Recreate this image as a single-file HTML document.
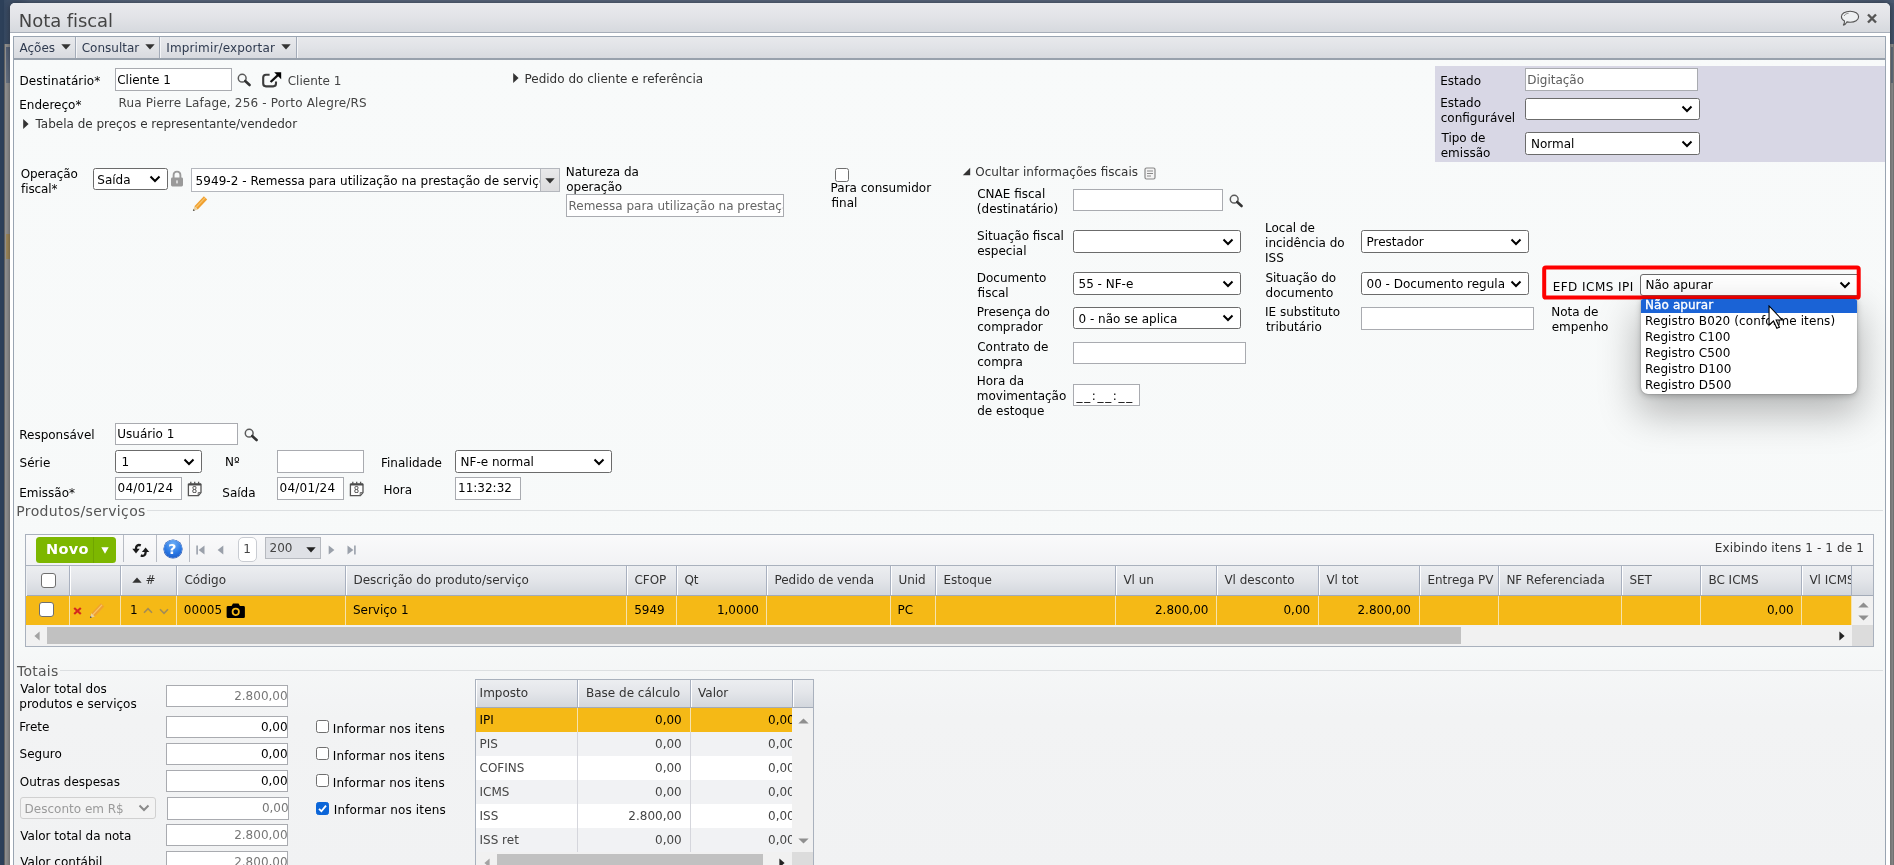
<!DOCTYPE html>
<html lang="pt-BR"><head><meta charset="utf-8"><title>Nota fiscal</title>
<style>
html,body{margin:0;padding:0}
body{width:1894px;height:865px;overflow:hidden;position:relative;background:#8f8f8f;font-family:'DejaVu Sans','Liberation Sans',sans-serif;font-size:12px;line-height:14px;color:#000}
.a{position:absolute}
.t{position:absolute;white-space:nowrap;font-size:12px;line-height:14px}
.i{position:absolute;box-sizing:border-box;border:1px solid #a9abb0;background:#fff;overflow:hidden}
.s{position:absolute;box-sizing:border-box;border:1px solid #6b6b6b;border-radius:2.5px;background:#fff;overflow:hidden}
.cb{position:absolute;box-sizing:border-box;width:13px;height:13px;border:1px solid #6f6f6f;border-radius:2.5px;background:#fff}
.hc{position:absolute;top:0;height:29px;box-sizing:border-box;border-left:1px solid #fff;border-right:1px solid #a8b0bf}
.hc .t{top:10px;color:#333}
.dc{position:absolute;top:0;height:29px;box-sizing:border-box;border-right:1px solid #e3e3e3}
.dc .t{top:10.6px}
.tr{position:absolute;left:0;width:316px;height:24px}
.tr .t{top:5px;color:#444}
.sep{position:absolute;top:37px;width:1px;height:21px;background:#a3abb8;box-shadow:1px 0 0 #f4f5f7}
</style></head><body><div id="root" style="position:absolute;left:0;top:0;width:1894px;height:865px;overflow:hidden;will-change:transform">

<div class="a" style="left:0;top:0;width:1894px;height:865px;background:#949494"></div>
<div class="a" style="left:0;top:0;width:1894px;height:44px;background:linear-gradient(to right,#30435b 0,#3c4d66 8px,#4a5a72 14px,#4a5a72 1884px,#45556d 1894px)"></div>
<div class="a" style="left:0;top:0;width:1894px;height:3px;background:linear-gradient(to right,#34465e 0,#506078 30px,#5c6a80 160px,#5c6a80 1800px,#4a5a72 1894px)"></div>
<div class="a" style="left:0;top:0;width:4px;height:865px;background:#2d4059"></div>
<div class="a" style="left:4px;top:44px;width:1px;height:821px;background:#626262"></div>
<div class="a" style="left:6px;top:47px;width:4px;height:36px;background:linear-gradient(#56637a,#6c7889)"></div>
<div class="a" style="left:6px;top:234px;width:4px;height:25px;background:#a38c5e"></div>
<div class="a" style="left:1891px;top:47px;width:2px;height:36px;background:#66717f"></div>
<div class="a" style="left:1893px;top:44px;width:1px;height:821px;background:#7a7a7a"></div>
<div class="a" style="left:10px;top:3px;width:1880px;height:870px;background:#fff;border-radius:5px 5px 0 0;box-shadow:0 0 6px rgba(0,0,0,.5)"></div>
<div class="a" style="left:10px;top:3px;width:1880px;height:29px;border-radius:5px 5px 0 0;background:linear-gradient(#e9eaed,#e3e4e8 45%,#d6d9de);border-bottom:1px solid #a7aeb9"></div>
<div class="t " style="left:18.84px;top:10px;font-size:18px;line-height:21px;color:#444;letter-spacing:-0.07px">Nota fiscal</div>
<svg class="a" style="left:1840px;top:9.5px" width="20" height="17" viewBox="0 0 20 17"><path d="M10.2 1.2 C15 1.2 18.6 3.6 18.6 6.8 C18.6 10 15 12.3 10.2 12.3 C9 12.3 7.9 12.2 6.9 11.9 C6 13.6 4.6 14.8 3.2 15.3 C4.2 14.2 4.6 12.6 4.5 11 C2.6 10 1.4 8.5 1.4 6.8 C1.4 3.6 5.2 1.2 10.2 1.2 Z" fill="#eef0f2" stroke="#555" stroke-width="1.1"/><path d="M4.2 6 C4.6 4.4 6.6 3.4 8.6 3.3" fill="none" stroke="#777" stroke-width="0.8"/></svg>
<svg class="a" style="left:1866px;top:13px" width="12" height="11" viewBox="0 0 12 11"><path d="M2 1.5 L10 9.5 M10 1.5 L2 9.5" stroke="#555" stroke-width="2.4"/></svg>
<div class="a" style="left:13px;top:36px;width:1873px;height:840px;box-sizing:border-box;border:1px solid #9aa5b2;background:linear-gradient(#f8fafa 0,#f7f9f9 600px,#f2f3f4 680px,#f1f2f3 100%)"></div>
<div class="a" style="left:14px;top:37px;width:1871px;height:21px;background:linear-gradient(#e8e9ec,#e1e3e7 50%,#d8dadf);border-bottom:2px solid #98a1ac"></div>
<div class="t " style="left:19.50px;top:41px;font-size:12px;line-height:14px;color:#2f3a4f;">Ações</div>
<div class="t " style="left:81.73px;top:41px;font-size:12px;line-height:14px;color:#2f3a4f;">Consultar</div>
<div class="t " style="left:166.22px;top:41px;font-size:12px;line-height:14px;color:#2f3a4f;letter-spacing:0.15px">Imprimir/exportar</div>
<svg class="a" style="left:61px;top:43.5px" width="10" height="6" viewBox="0 0 10 6"><path d="M0.3 0.3 H9.7 L5 5.6 Z" fill="#333"/></svg>
<svg class="a" style="left:145px;top:43.5px" width="10" height="6" viewBox="0 0 10 6"><path d="M0.3 0.3 H9.7 L5 5.6 Z" fill="#333"/></svg>
<svg class="a" style="left:281px;top:43.5px" width="10" height="6" viewBox="0 0 10 6"><path d="M0.3 0.3 H9.7 L5 5.6 Z" fill="#333"/></svg>
<div class="sep" style="left:75px"></div>
<div class="sep" style="left:159px"></div>
<div class="sep" style="left:296px"></div>
<div class="t " style="left:19.52px;top:74px;font-size:12px;line-height:14px;color:#000;letter-spacing:0.1px">Destinatário*</div>
<div class="i" style="left:115px;top:68px;width:117px;height:23px;"><div class="t" style="left:1.2px;top:4.00px;color:#000">Cliente 1</div></div>
<svg class="a" style="left:237.3px;top:72.6px" width="15" height="14" viewBox="0 0 15 14"><circle cx="5.2" cy="5.2" r="3.9" fill="none" stroke="#5a5a5a" stroke-width="1.5"/><path d="M8.2 8 L12.6 12" stroke="#333" stroke-width="2.6" stroke-linecap="round"/></svg>
<svg class="a" style="left:261px;top:71px" width="22" height="18" viewBox="0 0 22 18"><path d="M8.6 3.7 H5 Q2.2 3.7 2.2 6.5 V12.6 Q2.2 15.4 5 15.4 H12.2 Q15 15.4 15 12.6 V10.6" fill="none" stroke="#3c3c3c" stroke-width="2.1"/><path d="M9.6 11 L17.5 3.6" stroke="#111" stroke-width="2.3"/><path d="M13.2 1.2 H20.2 V8.2 Z" fill="#000"/></svg>
<div class="t " style="left:287.73px;top:74px;font-size:12px;line-height:14px;color:#444;">Cliente 1</div>
<div class="t " style="left:19.22px;top:98px;font-size:12px;line-height:14px;color:#000;">Endereço*</div>
<div class="t " style="left:118.52px;top:96px;font-size:12px;line-height:14px;color:#444;letter-spacing:0.17px">Rua Pierre Lafage, 256 - Porto Alegre/RS</div>
<svg class="a" style="left:22.5px;top:118.5px" width="6" height="10" viewBox="0 0 6 10"><path d="M0.2 0 L5.6 5 L0.2 10 Z" fill="#333"/></svg>
<div class="t " style="left:35.44px;top:117px;font-size:12px;line-height:14px;color:#333;">Tabela de preços e representante/vendedor</div>
<svg class="a" style="left:512.5px;top:73px" width="6" height="10" viewBox="0 0 6 10"><path d="M0.2 0 L5.6 5 L0.2 10 Z" fill="#333"/></svg>
<div class="t " style="left:524.47px;top:72px;font-size:12px;line-height:14px;color:#333;">Pedido do cliente e referência</div>
<div class="a" style="left:1435px;top:66px;width:450px;height:95.6px;background:#d8d7e5"></div>
<div class="t " style="left:1440.22px;top:74px;font-size:12px;line-height:14px;color:#000;">Estado</div>
<div class="i" style="left:1525px;top:68px;width:173px;height:23px;"><div class="t" style="left:1.2px;top:4.00px;color:#5c5c5c">Digitação</div></div>
<div class="t " style="left:1440.22px;top:96px;font-size:12px;line-height:14px;color:#000;">Estado</div>
<div class="t " style="left:1440.74px;top:111px;font-size:12px;line-height:14px;color:#000;">configurável</div>
<div class="s" style="left:1525px;top:98px;width:175px;height:22px;"><svg class="a" style="left:155px;top:6.0px" width="12" height="8" viewBox="0 0 12 8"><path d="M1.5 1.5 L6 6 L10.5 1.5" fill="none" stroke="#000" stroke-width="2" stroke-linecap="butt" stroke-linejoin="miter"/></svg></div>
<div class="t " style="left:1441.44px;top:131px;font-size:12px;line-height:14px;color:#000;">Tipo de</div>
<div class="t " style="left:1440.74px;top:146px;font-size:12px;line-height:14px;color:#000;">emissão</div>
<div class="s" style="left:1525px;top:132px;width:175px;height:23px;"><div class="t" style="left:5px;top:4.00px;color:#000">Normal</div><svg class="a" style="left:155px;top:6.5px" width="12" height="8" viewBox="0 0 12 8"><path d="M1.5 1.5 L6 6 L10.5 1.5" fill="none" stroke="#000" stroke-width="2" stroke-linecap="butt" stroke-linejoin="miter"/></svg></div>
<div class="t " style="left:20.73px;top:167px;font-size:12px;line-height:14px;color:#000;letter-spacing:-0.12px">Operação</div>
<div class="t " style="left:21.12px;top:182px;font-size:12px;line-height:14px;color:#000;letter-spacing:-0.12px">fiscal*</div>
<div class="s" style="left:93px;top:168px;width:75px;height:22px;"><div class="t" style="left:3.3px;top:4.00px;color:#000">Saída</div><svg class="a" style="left:55px;top:6.0px" width="12" height="8" viewBox="0 0 12 8"><path d="M1.5 1.5 L6 6 L10.5 1.5" fill="none" stroke="#000" stroke-width="2" stroke-linecap="butt" stroke-linejoin="miter"/></svg></div>
<svg class="a" style="left:170px;top:169.8px" width="14" height="17" viewBox="0 0 14 17"><path d="M3.6 8 V5.2 Q3.6 1.6 7 1.6 Q10.4 1.6 10.4 5.2 V8" fill="none" stroke="#9a9a9a" stroke-width="1.9"/><rect x="1" y="7.4" width="12" height="9" rx="1.4" fill="#9a9a9a"/><rect x="6.2" y="10.4" width="1.6" height="3" fill="#e8e8e8"/></svg>
<div class="i" style="left:191px;top:168px;width:350px;height:24px;border-color:#b4b7bd"><div class="t" style="left:3.6px;top:5px;letter-spacing:0.045px">5949-2 - Remessa para utilização na prestação de serviços</div></div>
<div class="a" style="left:540px;top:168px;width:20px;height:24px;box-sizing:border-box;border:1px solid #b4b7bd;background:linear-gradient(#e9e9ea,#dcdcde)"><svg class="a" style="left:4px;top:9px" width="10" height="6" viewBox="0 0 10 6"><path d="M0.3 0.3 H9.7 L5 5.6 Z" fill="#333"/></svg></div>
<svg class="a" style="left:191.8px;top:195.2px" width="16.5" height="16.5" viewBox="0 0 15 15"><path d="M2.2 10.3 L10.8 1.2 L13.8 4 L5.2 13.2 Z" fill="#f0a030"/><path d="M3.5 11.5 L11.8 2.6" stroke="#f7c46a" stroke-width="1.2"/><path d="M2.2 10.3 L5.2 13.2 L0.8 14.6 Z" fill="#e8cfa0"/><path d="M0.8 14.6 L1.4 12.8 L2.6 14 Z" fill="#444"/></svg>
<div class="t " style="left:565.72px;top:165px;font-size:12px;line-height:14px;color:#000;">Natureza da</div>
<div class="t " style="left:566.24px;top:180px;font-size:12px;line-height:14px;color:#000;">operação</div>
<div class="i" style="left:566px;top:194px;width:218px;height:23px;"><div class="t" style="left:1.5px;top:4.00px;color:#666">Remessa para utilização na prestação de serviços</div></div>
<div class="cb" style="left:835.4px;top:168px;width:13.5px;height:13.5px"></div>
<div class="t " style="left:830.62px;top:181px;font-size:12px;line-height:14px;color:#000;">Para consumidor</div>
<div class="t " style="left:831.52px;top:196px;font-size:12px;line-height:14px;color:#000;">final</div>
<svg class="a" style="left:962px;top:167px" width="9" height="9" viewBox="0 0 9 9"><path d="M8.2 0.8 V8.2 H0.8 Z" fill="#333"/></svg>
<div class="t " style="left:975.23px;top:165px;font-size:12px;line-height:14px;color:#333;">Ocultar informações fiscais</div>
<svg class="a" style="left:1143.5px;top:166.5px" width="12" height="13" viewBox="0 0 12 13"><rect x="1" y="1" width="10" height="11" rx="1.5" fill="#f4f4f4" stroke="#888" stroke-width="1.2"/><path d="M3 4 H9 M3 6.5 H9 M3 9 H7" stroke="#888" stroke-width="1.1"/></svg>
<div class="t " style="left:977.23px;top:187px;font-size:12px;line-height:14px;color:#000;">CNAE fiscal</div>
<div class="t " style="left:976.87px;top:202px;font-size:12px;line-height:14px;color:#000;">(destinatário)</div>
<div class="i" style="left:1073px;top:189px;width:150px;height:22px;"></div>
<svg class="a" style="left:1229px;top:194px" width="15" height="14" viewBox="0 0 15 14"><circle cx="5.2" cy="5.2" r="3.9" fill="none" stroke="#5a5a5a" stroke-width="1.5"/><path d="M8.2 8 L12.6 12" stroke="#333" stroke-width="2.6" stroke-linecap="round"/></svg>
<div class="t " style="left:977.11px;top:229px;font-size:12px;line-height:14px;color:#000;">Situação fiscal</div>
<div class="t " style="left:977.24px;top:244px;font-size:12px;line-height:14px;color:#000;">especial</div>
<div class="s" style="left:1073px;top:230px;width:168px;height:23px;"><svg class="a" style="left:148px;top:6.5px" width="12" height="8" viewBox="0 0 12 8"><path d="M1.5 1.5 L6 6 L10.5 1.5" fill="none" stroke="#000" stroke-width="2" stroke-linecap="butt" stroke-linejoin="miter"/></svg></div>
<div class="t " style="left:1265.02px;top:221px;font-size:12px;line-height:14px;color:#000;">Local de</div>
<div class="t " style="left:1265.07px;top:236px;font-size:12px;line-height:14px;color:#000;">incidência do</div>
<div class="t " style="left:1265.02px;top:251px;font-size:12px;line-height:14px;color:#000;">ISS</div>
<div class="s" style="left:1361px;top:230px;width:168px;height:23px;"><div class="t" style="left:4.5px;top:4.00px;color:#000">Prestador</div><svg class="a" style="left:148px;top:6.5px" width="12" height="8" viewBox="0 0 12 8"><path d="M1.5 1.5 L6 6 L10.5 1.5" fill="none" stroke="#000" stroke-width="2" stroke-linecap="butt" stroke-linejoin="miter"/></svg></div>
<div class="t " style="left:976.72px;top:271px;font-size:12px;line-height:14px;color:#000;">Documento</div>
<div class="t " style="left:977.62px;top:286px;font-size:12px;line-height:14px;color:#000;">fiscal</div>
<div class="s" style="left:1073px;top:272px;width:168px;height:23px;"><div class="t" style="left:4.5px;top:4.00px;color:#000">55 - NF-e</div><svg class="a" style="left:148px;top:6.5px" width="12" height="8" viewBox="0 0 12 8"><path d="M1.5 1.5 L6 6 L10.5 1.5" fill="none" stroke="#000" stroke-width="2" stroke-linecap="butt" stroke-linejoin="miter"/></svg></div>
<div class="t " style="left:1265.41px;top:271px;font-size:12px;line-height:14px;color:#000;">Situação do</div>
<div class="t " style="left:1265.54px;top:286px;font-size:12px;line-height:14px;color:#000;">documento</div>
<div class="s" style="left:1361px;top:272px;width:168px;height:23px;"><div class="t" style="left:4.5px;top:4.00px;color:#000"><span style="display:inline-block;width:137.5px;overflow:hidden;vertical-align:top">00 - Documento regular</span></div><svg class="a" style="left:148px;top:6.5px" width="12" height="8" viewBox="0 0 12 8"><path d="M1.5 1.5 L6 6 L10.5 1.5" fill="none" stroke="#000" stroke-width="2" stroke-linecap="butt" stroke-linejoin="miter"/></svg></div>
<div class="t " style="left:976.72px;top:305px;font-size:12px;line-height:14px;color:#000;">Presença do</div>
<div class="t " style="left:977.24px;top:320px;font-size:12px;line-height:14px;color:#000;">comprador</div>
<div class="s" style="left:1073px;top:307px;width:168px;height:22px;"><div class="t" style="left:4.5px;top:4.00px;color:#000">0 - não se aplica</div><svg class="a" style="left:148px;top:6.0px" width="12" height="8" viewBox="0 0 12 8"><path d="M1.5 1.5 L6 6 L10.5 1.5" fill="none" stroke="#000" stroke-width="2" stroke-linecap="butt" stroke-linejoin="miter"/></svg></div>
<div class="t " style="left:1265.02px;top:305px;font-size:12px;line-height:14px;color:#000;">IE substituto</div>
<div class="t " style="left:1265.88px;top:320px;font-size:12px;line-height:14px;color:#000;">tributário</div>
<div class="i" style="left:1361px;top:307px;width:173px;height:23px;"></div>
<div class="t " style="left:977.23px;top:340px;font-size:12px;line-height:14px;color:#000;">Contrato de</div>
<div class="t " style="left:977.24px;top:355px;font-size:12px;line-height:14px;color:#000;">compra</div>
<div class="i" style="left:1073px;top:342px;width:173px;height:22px;"></div>
<div class="t " style="left:976.72px;top:374px;font-size:12px;line-height:14px;color:#000;">Hora da</div>
<div class="t " style="left:976.81px;top:389px;font-size:12px;line-height:14px;color:#000;">movimentação</div>
<div class="t " style="left:977.24px;top:404px;font-size:12px;line-height:14px;color:#000;">de estoque</div>
<div class="i" style="left:1073px;top:384px;width:67px;height:22px;"><div class="t" style="left:2.5px;top:4.00px;color:#000"><span style="letter-spacing:1.65px">__:__:__</span></div></div>
<div class="t " style="left:1552.72px;top:280px;font-size:12px;line-height:14px;color:#000;letter-spacing:0.46px">EFD ICMS IPI</div>
<div class="s" style="left:1640px;top:274px;width:218px;height:22px;border-radius:3px 0 0 3px"><div class="t" style="left:4.5px;top:3.00px;color:#000">Não apurar</div></div>
<svg class="a" style="left:1839px;top:281.2px" width="12" height="8" viewBox="0 0 12 8"><path d="M1.5 1.5 L6 6 L10.5 1.5" fill="none" stroke="#000" stroke-width="2" stroke-linecap="butt" stroke-linejoin="miter"/></svg>
<svg class="a" style="left:1540px;top:262px" width="324" height="40" viewBox="0 0 324 40"><rect x="4.2" y="5.4" width="314.5" height="30.1" rx="1.6" fill="none" stroke="#fe0000" stroke-width="4"/></svg>
<div class="t " style="left:1551.22px;top:305px;font-size:12px;line-height:14px;color:#000;">Nota de</div>
<div class="t " style="left:1551.74px;top:320px;font-size:12px;line-height:14px;color:#000;">empenho</div>
<div class="a" style="left:1640.5px;top:299px;width:216.5px;height:94.5px;background:#fff;border-radius:2px 2px 7px 7px;overflow:hidden;box-shadow:0 16px 38px 4px rgba(0,0,0,.27),0 2px 6px rgba(0,0,0,.22),0 0 1.5px rgba(0,0,0,.4)"><div class="a" style="left:0;top:0;width:100%;height:14px;background:#1a63d6"></div>
<div class="t" style="left:4.5px;top:-1.15px;color:#fff;letter-spacing:0.1px;-webkit-text-stroke:0.35px #fff;">Não apurar</div>
<div class="t" style="left:4.5px;top:14.85px;color:#000;letter-spacing:0.1px;">Registro B020 (conforme itens)</div>
<div class="t" style="left:4.5px;top:30.85px;color:#000;letter-spacing:0.1px;">Registro C100</div>
<div class="t" style="left:4.5px;top:46.85px;color:#000;letter-spacing:0.1px;">Registro C500</div>
<div class="t" style="left:4.5px;top:62.85px;color:#000;letter-spacing:0.1px;">Registro D100</div>
<div class="t" style="left:4.5px;top:78.85px;color:#000;letter-spacing:0.1px;">Registro D500</div>
</div>
<svg class="a" style="left:1768px;top:305px" width="17.5" height="26" viewBox="0 0 18 27"><path d="M1 1 V21 L5.6 16.6 L9.1 24.2 L11.8 23 L8.4 15.6 H14.8 Z" fill="#fff" stroke="#000" stroke-width="1.15" stroke-linejoin="miter"/></svg>
<div class="t " style="left:19.22px;top:428px;font-size:12px;line-height:14px;color:#000;">Responsável</div>
<div class="i" style="left:115px;top:423px;width:123px;height:22px;"><div class="t" style="left:1.3px;top:3.00px;color:#000">Usuário 1</div></div>
<svg class="a" style="left:243.5px;top:428px" width="15" height="14" viewBox="0 0 15 14"><circle cx="5.2" cy="5.2" r="3.9" fill="none" stroke="#5a5a5a" stroke-width="1.5"/><path d="M8.2 8 L12.6 12" stroke="#333" stroke-width="2.6" stroke-linecap="round"/></svg>
<div class="t " style="left:19.61px;top:456px;font-size:12px;line-height:14px;color:#000;">Série</div>
<div class="s" style="left:115px;top:450px;width:87px;height:23px;"><div class="t" style="left:5.5px;top:4.00px;color:#000">1</div><svg class="a" style="left:67px;top:6.5px" width="12" height="8" viewBox="0 0 12 8"><path d="M1.5 1.5 L6 6 L10.5 1.5" fill="none" stroke="#000" stroke-width="2" stroke-linecap="butt" stroke-linejoin="miter"/></svg></div>
<div class="t " style="left:224.97px;top:455px;font-size:12px;line-height:14px;color:#000;">Nº</div>
<div class="i" style="left:277px;top:450px;width:87px;height:23px;"></div>
<div class="t " style="left:380.97px;top:456px;font-size:12px;line-height:14px;color:#000;">Finalidade</div>
<div class="s" style="left:455px;top:450px;width:157px;height:23px;"><div class="t" style="left:4.5px;top:4.00px;color:#000">NF-e normal</div><svg class="a" style="left:137px;top:6.5px" width="12" height="8" viewBox="0 0 12 8"><path d="M1.5 1.5 L6 6 L10.5 1.5" fill="none" stroke="#000" stroke-width="2" stroke-linecap="butt" stroke-linejoin="miter"/></svg></div>
<div class="t " style="left:19.22px;top:486px;font-size:12px;line-height:14px;color:#000;">Emissão*</div>
<div class="i" style="left:115px;top:477px;width:67px;height:23px;"><div class="t" style="left:1.6px;top:3.00px;color:#000"><span style="letter-spacing:0.22px">04/01/24</span></div></div>
<svg class="a" style="left:187px;top:481px" width="16" height="16" viewBox="0 0 16 16"><path d="M1.4 3.4 H14 V11.6 L11.4 14.6 H1.4 Z" fill="#fdfdfd" stroke="#555" stroke-width="1.3"/><path d="M1.4 3.4 H14" stroke="#4a4a4a" stroke-width="2.2"/><path d="M3.8 0.8 V3.2 M7.7 0.8 V3.2 M11.6 0.8 V3.2" stroke="#555" stroke-width="1.3"/><path d="M11.2 14.4 V11.6 H14" fill="none" stroke="#666" stroke-width="1"/><text x="7.4" y="12.4" font-size="8.5" text-anchor="middle" fill="#444" font-family="'DejaVu Sans','Liberation Sans',sans-serif">8</text></svg>
<div class="t " style="left:222.31px;top:486px;font-size:12px;line-height:14px;color:#000;">Saída</div>
<div class="i" style="left:277px;top:477px;width:67px;height:23px;"><div class="t" style="left:1.6px;top:3.00px;color:#000"><span style="letter-spacing:0.22px">04/01/24</span></div></div>
<svg class="a" style="left:348.7px;top:481px" width="16" height="16" viewBox="0 0 16 16"><path d="M1.4 3.4 H14 V11.6 L11.4 14.6 H1.4 Z" fill="#fdfdfd" stroke="#555" stroke-width="1.3"/><path d="M1.4 3.4 H14" stroke="#4a4a4a" stroke-width="2.2"/><path d="M3.8 0.8 V3.2 M7.7 0.8 V3.2 M11.6 0.8 V3.2" stroke="#555" stroke-width="1.3"/><path d="M11.2 14.4 V11.6 H14" fill="none" stroke="#666" stroke-width="1"/><text x="7.4" y="12.4" font-size="8.5" text-anchor="middle" fill="#444" font-family="'DejaVu Sans','Liberation Sans',sans-serif">8</text></svg>
<div class="t " style="left:383.47px;top:483px;font-size:12px;line-height:14px;color:#000;">Hora</div>
<div class="i" style="left:455px;top:477px;width:66px;height:23px;"><div class="t" style="left:2px;top:3.00px;color:#000">11:32:32</div></div>
<div class="a" style="left:147px;top:510px;width:1736px;height:1px;background:#dcdfe1"></div>
<div class="t " style="left:16.33px;top:503px;font-size:14px;line-height:17px;color:#555;letter-spacing:0.35px">Produtos/serviços</div>
<div class="a" style="left:25px;top:534px;width:1849px;height:113px;box-sizing:border-box;border:1px solid #a9b1bd;background:#f1f1f1"></div>
<div class="a" style="left:26px;top:535px;width:1847px;height:31px;background:linear-gradient(#fafafb,#f1f2f4)"></div>
<div class="a" style="left:36px;top:537px;width:80px;height:25.5px;border-radius:3.5px;background:#7db700"><div class="a" style="left:57px;top:0;width:1px;height:100%;background:#70a500"></div></div>
<div class="t " style="left:45.98px;top:541px;font-size:14.5px;line-height:17px;color:#fff;font-weight:bold;letter-spacing:0.3px">Novo</div>
<svg class="a" style="left:100.5px;top:546.8px" width="8" height="7" viewBox="0 0 8 7"><path d="M0.3 0.3 H7.7 L4 6.7 Z" fill="#fff"/></svg>
<div class="a" style="left:123px;top:535px;width:1px;height:27px;background:#b8bcc4"></div>
<div class="a" style="left:156px;top:535px;width:1px;height:27px;background:#b8bcc4"></div>
<div class="a" style="left:189px;top:535px;width:1px;height:27px;background:#b8bcc4"></div>
<svg class="a" style="left:131.5px;top:543px" width="18" height="15" viewBox="0 0 18 15"><path d="M8.8 2.4 C6 1.2 4 2.8 4 5.2 V6.8" fill="none" stroke="#1a1a1a" stroke-width="2.3"/><path d="M0.3 5.8 H7.7 L4 10.4 Z" fill="#1a1a1a"/><path d="M8.8 12.4 C11.6 13.6 13.6 12 13.6 9.6 V8" fill="none" stroke="#1a1a1a" stroke-width="2.3"/><path d="M17.3 9 H9.9 L13.6 4.4 Z" fill="#1a1a1a"/></svg>
<div class="a" style="left:163.5px;top:539.5px;width:18.5px;height:18.5px;border-radius:50%;background:radial-gradient(circle at 50% 22%,#6fb0f7,#2a78e4 55%,#1550be);box-shadow:0 0 0 0.6px #1b4fae"></div>
<div class="t " style="left:168.19px;top:541px;font-size:14px;line-height:17px;color:#fff;font-weight:bold">?</div>
<svg class="a" style="left:195.5px;top:545px" width="9" height="10" viewBox="0 0 9 10"><rect x="0.3" y="0.5" width="1.6" height="9" fill="#9aa0aa"/><path d="M8.5 0.5 V9.5 L2.6 5 Z" fill="#9aa0aa"/></svg>
<svg class="a" style="left:216.5px;top:545px" width="7" height="10" viewBox="0 0 7 10"><path d="M6.3 0.5 V9.5 L0.6 5 Z" fill="#9aa0aa"/></svg>
<div class="a" style="left:238px;top:537px;width:18.5px;height:25px;box-sizing:border-box;border:1px solid #c9ccd2;border-radius:5px;background:#fff"></div>
<div class="t " style="left:243.28px;top:542px;font-size:12px;line-height:14px;color:#444;">1</div>
<div class="a" style="left:265px;top:537px;width:55.5px;height:21.5px;box-sizing:border-box;border:1px solid #b6b9bf;background:#dfe1e6"></div>
<div class="t " style="left:269.52px;top:541px;font-size:12px;line-height:14px;color:#444;">200</div>
<svg class="a" style="left:306px;top:546.5px" width="10" height="6" viewBox="0 0 10 6"><path d="M0.3 0.3 H9.7 L5 5.6 Z" fill="#222"/></svg>
<svg class="a" style="left:327.5px;top:545px" width="7" height="10" viewBox="0 0 7 10"><path d="M0.7 0.5 V9.5 L6.4 5 Z" fill="#9aa0aa"/></svg>
<svg class="a" style="left:347px;top:545px" width="9" height="10" viewBox="0 0 9 10"><rect x="7.1" y="0.5" width="1.6" height="9" fill="#9aa0aa"/><path d="M0.5 0.5 V9.5 L6.4 5 Z" fill="#9aa0aa"/></svg>
<div class="t " style="left:1714.82px;top:541px;font-size:12px;line-height:14px;color:#333;letter-spacing:0.13px">Exibindo itens 1 - 1 de 1</div>
<div class="a" style="left:26px;top:565px;width:1847px;height:31px;box-sizing:border-box;border-top:1px solid #a9b1bd;border-bottom:1px solid #a3abb8;background:linear-gradient(#eceef1,#e4e6ea 45%,#d3d7dd);overflow:hidden">
<div class="hc" style="left:0px;width:44px;overflow:hidden"><div class="t" style="left:6.4px;top:6.5px;color:#333"></div></div>
<div class="hc" style="left:44px;width:51px;overflow:hidden"><div class="t" style="left:6.4px;top:6.5px;color:#333"></div></div>
<div class="hc" style="left:95px;width:56px;overflow:hidden"><div class="t" style="left:6.4px;top:6.5px;color:#333"></div></div>
<div class="hc" style="left:151px;width:169px;overflow:hidden"><div class="t" style="left:6.4px;top:6.5px;color:#333">Código</div></div>
<div class="hc" style="left:320px;width:281px;overflow:hidden"><div class="t" style="left:6.4px;top:6.5px;color:#333">Descrição do produto/serviço</div></div>
<div class="hc" style="left:601px;width:50px;overflow:hidden"><div class="t" style="left:6.4px;top:6.5px;color:#333">CFOP</div></div>
<div class="hc" style="left:651px;width:90px;overflow:hidden"><div class="t" style="left:6.4px;top:6.5px;color:#333">Qt</div></div>
<div class="hc" style="left:741px;width:124px;overflow:hidden"><div class="t" style="left:6.4px;top:6.5px;color:#333">Pedido de venda</div></div>
<div class="hc" style="left:865px;width:45px;overflow:hidden"><div class="t" style="left:6.4px;top:6.5px;color:#333">Unid</div></div>
<div class="hc" style="left:910px;width:180px;overflow:hidden"><div class="t" style="left:6.4px;top:6.5px;color:#333">Estoque</div></div>
<div class="hc" style="left:1090px;width:101px;overflow:hidden"><div class="t" style="left:6.4px;top:6.5px;color:#333">Vl un</div></div>
<div class="hc" style="left:1191px;width:102px;overflow:hidden"><div class="t" style="left:6.4px;top:6.5px;color:#333">Vl desconto</div></div>
<div class="hc" style="left:1293px;width:101px;overflow:hidden"><div class="t" style="left:6.4px;top:6.5px;color:#333">Vl tot</div></div>
<div class="hc" style="left:1394px;width:79px;overflow:hidden"><div class="t" style="left:6.4px;top:6.5px;color:#333">Entrega PV</div></div>
<div class="hc" style="left:1473px;width:123px;overflow:hidden"><div class="t" style="left:6.4px;top:6.5px;color:#333">NF Referenciada</div></div>
<div class="hc" style="left:1596px;width:79px;overflow:hidden"><div class="t" style="left:6.4px;top:6.5px;color:#333">SET</div></div>
<div class="hc" style="left:1675px;width:101px;overflow:hidden"><div class="t" style="left:6.4px;top:6.5px;color:#333">BC ICMS</div></div>
<div class="hc" style="left:1776px;width:50px;overflow:hidden"><div class="t" style="left:6.4px;top:6.5px;color:#333">Vl ICMS</div></div>
</div>
<div class="a" style="left:26px;top:566px;width:1px;height:59px;background:#eef0f2"></div>
<div class="cb" style="left:40.5px;top:573px;width:15px;height:15px;border-radius:3px"></div>
<svg class="a" style="left:132px;top:576.5px" width="10" height="6" viewBox="0 0 10 6"><path d="M0.3 5.7 H9.7 L5 0.4 Z" fill="#333"/></svg>
<div class="t " style="left:145.48px;top:573px;font-size:12px;line-height:14px;color:#333;">#</div>
<div class="a" style="left:26px;top:596px;width:1826px;height:29px;background:#f5b916;overflow:hidden">
<div class="dc" style="left:0px;width:44px;border-right-color:#f6e3ad"></div>
<div class="dc" style="left:44px;width:51px;border-right-color:#f6e3ad"></div>
<div class="dc" style="left:95px;width:56px;border-right-color:#f6e3ad"></div>
<div class="dc" style="left:151px;width:169px;border-right-color:#f6e3ad"></div>
<div class="dc" style="left:320px;width:281px;border-right-color:#f6e3ad"></div>
<div class="dc" style="left:601px;width:50px;border-right-color:#f6e3ad"></div>
<div class="dc" style="left:651px;width:90px;border-right-color:#f6e3ad"></div>
<div class="dc" style="left:741px;width:124px;border-right-color:#f6e3ad"></div>
<div class="dc" style="left:865px;width:45px;border-right-color:#f6e3ad"></div>
<div class="dc" style="left:910px;width:180px;border-right-color:#f6e3ad"></div>
<div class="dc" style="left:1090px;width:101px;border-right-color:#f6e3ad"></div>
<div class="dc" style="left:1191px;width:102px;border-right-color:#f6e3ad"></div>
<div class="dc" style="left:1293px;width:101px;border-right-color:#f6e3ad"></div>
<div class="dc" style="left:1394px;width:79px;border-right-color:#f6e3ad"></div>
<div class="dc" style="left:1473px;width:123px;border-right-color:#f6e3ad"></div>
<div class="dc" style="left:1596px;width:79px;border-right-color:#f6e3ad"></div>
<div class="dc" style="left:1675px;width:101px;border-right-color:#f6e3ad"></div>
<div class="dc" style="left:1776px;width:50px;border-right-color:#f6e3ad"></div>
</div>
<div class="cb" style="left:39px;top:602px;width:14.5px;height:14.5px;border-radius:3px"></div>
<svg class="a" style="left:73px;top:607px" width="9" height="8" viewBox="0 0 9 8"><path d="M1.2 1 L7.8 7 M7.8 1 L1.2 7" stroke="#d42a1f" stroke-width="2.2"/></svg>
<svg class="a" style="left:88.5px;top:601.5px" width="16.5" height="16.5" viewBox="0 0 15 15"><path d="M2.2 10.3 L10.8 1.2 L13.8 4 L5.2 13.2 Z" fill="#f0a030"/><path d="M3.5 11.5 L11.8 2.6" stroke="#f7c46a" stroke-width="1.2"/><path d="M2.2 10.3 L5.2 13.2 L0.8 14.6 Z" fill="#e8cfa0"/><path d="M0.8 14.6 L1.4 12.8 L2.6 14 Z" fill="#444"/></svg>
<div class="t " style="left:130.08px;top:603px;font-size:12px;line-height:14px;color:#000;">1</div>
<svg class="a" style="left:143px;top:607px" width="10" height="7" viewBox="0 0 10 7"><path d="M1 5.8 L5 1.6 L9 5.8" fill="none" stroke="#a28c58" stroke-width="1.6"/></svg>
<svg class="a" style="left:158.5px;top:607.5px" width="10" height="7" viewBox="0 0 10 7"><path d="M1 1.2 L5 5.4 L9 1.2" fill="none" stroke="#a28c58" stroke-width="1.6"/></svg>
<div class="t " style="left:183.86px;top:603px;font-size:12px;line-height:14px;color:#000;">00005</div>
<svg class="a" style="left:225.6px;top:602.4px" width="19.5" height="17" viewBox="0 0 19 16"><path d="M2 3.6 H5.4 L6.8 1.2 H12.2 L13.6 3.6 H17 Q18.4 3.6 18.4 5 V14 Q18.4 15.4 17 15.4 H2 Q0.6 15.4 0.6 14 V5 Q0.6 3.6 2 3.6 Z" fill="#000"/><circle cx="9.5" cy="9.3" r="3.1" fill="none" stroke="#f5b916" stroke-width="1.7"/></svg>
<div class="t " style="left:352.91px;top:603px;font-size:12px;line-height:14px;color:#000;">Serviço 1</div>
<div class="t " style="left:634.18px;top:603px;font-size:12px;line-height:14px;color:#000;">5949</div>
<div class="t" style="right:1135.10px;top:603px;color:#000">1,0000</div>
<div class="t " style="left:897.47px;top:603px;font-size:12px;line-height:14px;color:#000;">PC</div>
<div class="t" style="right:685.60px;top:603px;color:#000">2.800,00</div>
<div class="t" style="right:583.85px;top:603px;color:#000">0,00</div>
<div class="t" style="right:483.10px;top:603px;color:#000">2.800,00</div>
<div class="t" style="right:100.35px;top:603px;color:#000">0,00</div>
<div class="a" style="left:1852px;top:596px;width:21px;height:29px;background:#f1f1f1"></div>
<svg class="a" style="left:1857.5px;top:602px" width="11" height="6" viewBox="0 0 10 5"><path d="M0.3 4.8 H9.7 L5 0.2 Z" fill="#8f8f8f"/></svg>
<svg class="a" style="left:1857.5px;top:615px" width="11" height="6" viewBox="0 0 10 5"><path d="M0.3 0.2 H9.7 L5 4.8 Z" fill="#8f8f8f"/></svg>
<div class="a" style="left:26px;top:625px;width:1847px;height:21px;background:#f1f1f1"></div>
<div class="a" style="left:47px;top:627px;width:1414px;height:17px;background:#c1c1c1"></div>
<svg class="a" style="left:33.5px;top:630.5px" width="6" height="10" viewBox="0 0 6 10"><path d="M5.6 0.5 V9.5 L0.4 5 Z" fill="#a3a3a3"/></svg>
<svg class="a" style="left:1838.5px;top:630.5px" width="6" height="10" viewBox="0 0 6 10"><path d="M0.4 0.5 V9.5 L5.6 5 Z" fill="#222"/></svg>
<div class="a" style="left:1852px;top:625px;width:21px;height:21px;background:#dcdcdc"></div>
<div class="a" style="left:60px;top:670px;width:1823px;height:1px;background:#dcdfe1"></div>
<div class="t " style="left:17.04px;top:663px;font-size:14px;line-height:17px;color:#555;letter-spacing:0.25px">Totais</div>
<div class="t " style="left:20.30px;top:682px;font-size:12px;line-height:14px;color:#000;">Valor total dos</div>
<div class="t " style="left:19.31px;top:697px;font-size:12px;line-height:14px;color:#000;">produtos e serviços</div>
<div class="i" style="left:166px;top:685px;width:122px;height:22px;"><div class="t" style="right:-0.6px;top:3.00px;color:#777">2.800,00</div></div>
<div class="t " style="left:19.22px;top:720px;font-size:12px;line-height:14px;color:#000;">Frete</div>
<div class="i" style="left:166px;top:716px;width:122px;height:22px;"><div class="t" style="right:-0.6px;top:3.00px;color:#000">0,00</div></div>
<div class="t " style="left:19.61px;top:747px;font-size:12px;line-height:14px;color:#000;">Seguro</div>
<div class="i" style="left:166px;top:743px;width:122px;height:22px;"><div class="t" style="right:-0.6px;top:3.00px;color:#000">0,00</div></div>
<div class="t " style="left:19.73px;top:775px;font-size:12px;line-height:14px;color:#000;">Outras despesas</div>
<div class="i" style="left:166px;top:770px;width:122px;height:22px;"><div class="t" style="right:-0.6px;top:3.00px;color:#000">0,00</div></div>
<div class="a" style="left:20px;top:797px;width:136px;height:22px;box-sizing:border-box;border:1px solid #d0d0d0;border-radius:3px;background:#f3f3f3"></div>
<div class="t " style="left:24.62px;top:802px;font-size:12px;line-height:14px;color:#9a9a9a;">Desconto em R$</div>
<svg class="a" style="left:137.5px;top:804.2px" width="12" height="8" viewBox="0 0 12 8"><path d="M1.5 1.5 L6 6 L10.5 1.5" fill="none" stroke="#8a8a8a" stroke-width="2" stroke-linecap="butt" stroke-linejoin="miter"/></svg>
<div class="i" style="left:167px;top:797px;width:122px;height:22.5px;"><div class="t" style="right:-0.6px;top:3.00px;color:#777">0,00</div></div>
<div class="t " style="left:20.30px;top:829px;font-size:12px;line-height:14px;color:#000;">Valor total da nota</div>
<div class="i" style="left:166px;top:824px;width:122px;height:22px;"><div class="t" style="right:-0.6px;top:3.00px;color:#777">2.800,00</div></div>
<div class="t " style="left:20.30px;top:855px;font-size:12px;line-height:14px;color:#000;">Valor contábil</div>
<div class="i" style="left:166px;top:851px;width:122px;height:22px;"><div class="t" style="right:-0.6px;top:3.00px;color:#777">2.800,00</div></div>
<div class="cb" style="left:315.5px;top:720px"></div>
<div class="t " style="left:332.82px;top:722px;font-size:12px;line-height:14px;color:#000;letter-spacing:0.14px">Informar nos itens</div>
<div class="cb" style="left:315.5px;top:747px"></div>
<div class="t " style="left:332.82px;top:749px;font-size:12px;line-height:14px;color:#000;letter-spacing:0.14px">Informar nos itens</div>
<div class="cb" style="left:315.5px;top:774px"></div>
<div class="t " style="left:332.82px;top:776px;font-size:12px;line-height:14px;color:#000;letter-spacing:0.14px">Informar nos itens</div>
<div class="cb" style="left:315.75px;top:801.5px;background:#0b65d8;border-color:#0b65d8"><svg width="13" height="13" viewBox="0 0 13 13" style="position:absolute;left:-1px;top:-1px"><path d="M3 6.8 L5.4 9.2 L10 3.6" fill="none" stroke="#fff" stroke-width="1.8"/></svg></div>
<div class="t " style="left:333.82px;top:803px;font-size:12px;line-height:14px;color:#000;letter-spacing:0.14px">Informar nos itens</div>
<div class="a" style="left:475px;top:679px;width:339px;height:200px;box-sizing:border-box;border:1px solid #a9b1bd;background:#f1f1f1"></div>
<div class="a" style="left:476px;top:680px;width:337px;height:28px;box-sizing:border-box;border-bottom:1px solid #a3abb8;background:linear-gradient(#eceef1,#e4e6ea 45%,#d3d7dd);overflow:hidden">
<div class="hc" style="left:0px;width:102px;height:28px;overflow:hidden;"><div class="t" style="left:2.6px;top:6px;color:#333">Imposto</div></div>
<div class="hc" style="left:102px;width:113px;height:28px;overflow:hidden;"><div class="t" style="left:7px;top:6px;color:#333">Base de cálculo</div></div>
<div class="hc" style="left:215px;width:102px;height:28px;overflow:hidden;"><div class="t" style="left:6px;top:6px;color:#333">Valor</div></div>
<div class="hc" style="left:317px;width:20px;height:28px;overflow:hidden;border-right:none;"><div class="t" style="left:6px;top:6px;color:#333"></div></div>
</div>
<div class="a" style="left:476px;top:707.75px;width:316px;height:144.25px;overflow:hidden">
<div class="tr" style="top:-0.10px;background:#f5b916"><div class="a" style="left:100.5px;top:0;width:1px;height:24px;background:#f6e3ad"></div><div class="a" style="left:213.5px;top:0;width:1px;height:24px;background:#f6e3ad"></div><div class="t" style="left:3.5px;color:#000">IPI</div><div class="t" style="right:110.25px;color:#000">0,00</div><div class="t" style="left:292px;color:#000">0,00</div></div>
<div class="tr" style="top:23.90px;background:#f1f2f4"><div class="a" style="left:100.5px;top:0;width:1px;height:24px;background:#d5d6dc"></div><div class="a" style="left:213.5px;top:0;width:1px;height:24px;background:#d5d6dc"></div><div class="t" style="left:3.5px;color:#444">PIS</div><div class="t" style="right:110.25px;color:#444">0,00</div><div class="t" style="left:292px;color:#444">0,00</div></div>
<div class="tr" style="top:47.90px;background:#fff"><div class="a" style="left:100.5px;top:0;width:1px;height:24px;background:#d5d6dc"></div><div class="a" style="left:213.5px;top:0;width:1px;height:24px;background:#d5d6dc"></div><div class="t" style="left:3.5px;color:#444">COFINS</div><div class="t" style="right:110.25px;color:#444">0,00</div><div class="t" style="left:292px;color:#444">0,00</div></div>
<div class="tr" style="top:71.90px;background:#f1f2f4"><div class="a" style="left:100.5px;top:0;width:1px;height:24px;background:#d5d6dc"></div><div class="a" style="left:213.5px;top:0;width:1px;height:24px;background:#d5d6dc"></div><div class="t" style="left:3.5px;color:#444">ICMS</div><div class="t" style="right:110.25px;color:#444">0,00</div><div class="t" style="left:292px;color:#444">0,00</div></div>
<div class="tr" style="top:95.90px;background:#fff"><div class="a" style="left:100.5px;top:0;width:1px;height:24px;background:#d5d6dc"></div><div class="a" style="left:213.5px;top:0;width:1px;height:24px;background:#d5d6dc"></div><div class="t" style="left:3.5px;color:#444">ISS</div><div class="t" style="right:110.25px;color:#444">2.800,00</div><div class="t" style="left:292px;color:#444">0,00</div></div>
<div class="tr" style="top:119.90px;background:#f1f2f4"><div class="a" style="left:100.5px;top:0;width:1px;height:24px;background:#d5d6dc"></div><div class="a" style="left:213.5px;top:0;width:1px;height:24px;background:#d5d6dc"></div><div class="t" style="left:3.5px;color:#444">ISS ret</div><div class="t" style="right:110.25px;color:#444">0,00</div><div class="t" style="left:292px;color:#444">0,00</div></div>
</div>
<svg class="a" style="left:797.5px;top:717.5px" width="11" height="6" viewBox="0 0 10 5"><path d="M0.3 4.8 H9.7 L5 0.2 Z" fill="#8f8f8f"/></svg>
<svg class="a" style="left:797.5px;top:838px" width="11" height="6" viewBox="0 0 10 5"><path d="M0.3 0.2 H9.7 L5 4.8 Z" fill="#8f8f8f"/></svg>
<div class="a" style="left:497px;top:854px;width:265.5px;height:17px;background:#c1c1c1"></div>
<svg class="a" style="left:483.5px;top:857.5px" width="6" height="10" viewBox="0 0 6 10"><path d="M5.6 0.5 V9.5 L0.4 5 Z" fill="#a3a3a3"/></svg>
<svg class="a" style="left:778.5px;top:857.5px" width="6" height="10" viewBox="0 0 6 10"><path d="M0.4 0.5 V9.5 L5.6 5 Z" fill="#222"/></svg>
<div class="a" style="left:792px;top:852px;width:21px;height:20px;background:#dcdcdc"></div>
</div></body></html>
